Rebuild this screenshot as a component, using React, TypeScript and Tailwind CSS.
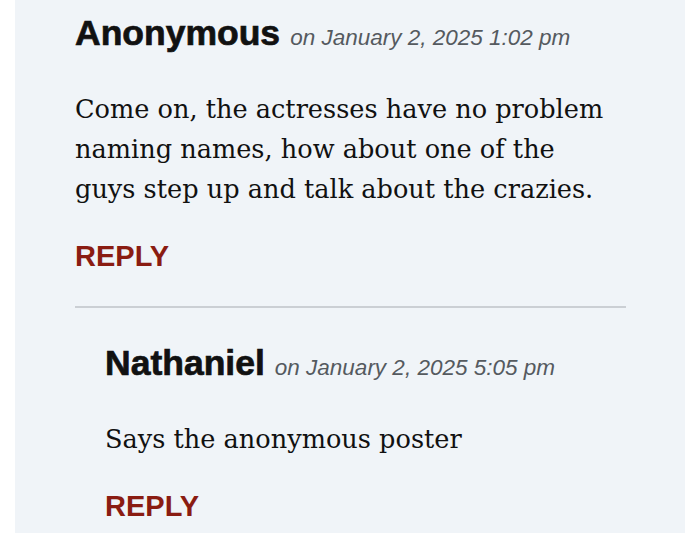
type Comment = {
  author: string;
  date: string;
  body: string;
};

const first: Comment = {
  author: "Anonymous",
  date: "on January 2, 2025 1:02 pm",
  body: "Come on, the actresses have no problem naming names, how about one of the guys step up and talk about the crazies.",
};

const reply: Comment = {
  author: "Nathaniel",
  date: "on January 2, 2025 5:05 pm",
  body: "Says the anonymous poster",
};

function CommentBlock({ comment }: { comment: Comment }) {
  return (
    <div>
      <div className="flex items-baseline h-[35px] leading-none">
        <span className="text-[35.5px] font-bold text-[#111111] [-webkit-text-stroke:0.7px_#111111]">
          {comment.author}
        </span>
        <span className="ml-[10px] text-[22.5px] italic text-[#555a5f]">
          {comment.date}
        </span>
      </div>
      <p className="mt-[38px] max-w-[538px] text-[25.6px] leading-[40px] text-[#111111] font-['DejaVu_Serif',serif]">
        {comment.body}
      </p>
      <button className="mt-[33px] block h-[29px] text-[29px] leading-none font-bold text-[#8a1c12]">
        REPLY
      </button>
    </div>
  );
}

export default function App() {
  return (
    <div className="w-[700px] h-[533px] overflow-hidden bg-white font-['Liberation_Sans',Arial,sans-serif]">
      <div className="ml-[15px] w-[670px] h-full bg-[#f0f4f8] pl-[60px] pr-[59px] pt-[16px]">
        <CommentBlock comment={first} />
        <hr className="mt-[35px] border-0 h-[2px] bg-[#cbcfd4]" />
        <div className="pl-[30px] pt-[38px]">
          <CommentBlock comment={reply} />
        </div>
      </div>
    </div>
  );
}
